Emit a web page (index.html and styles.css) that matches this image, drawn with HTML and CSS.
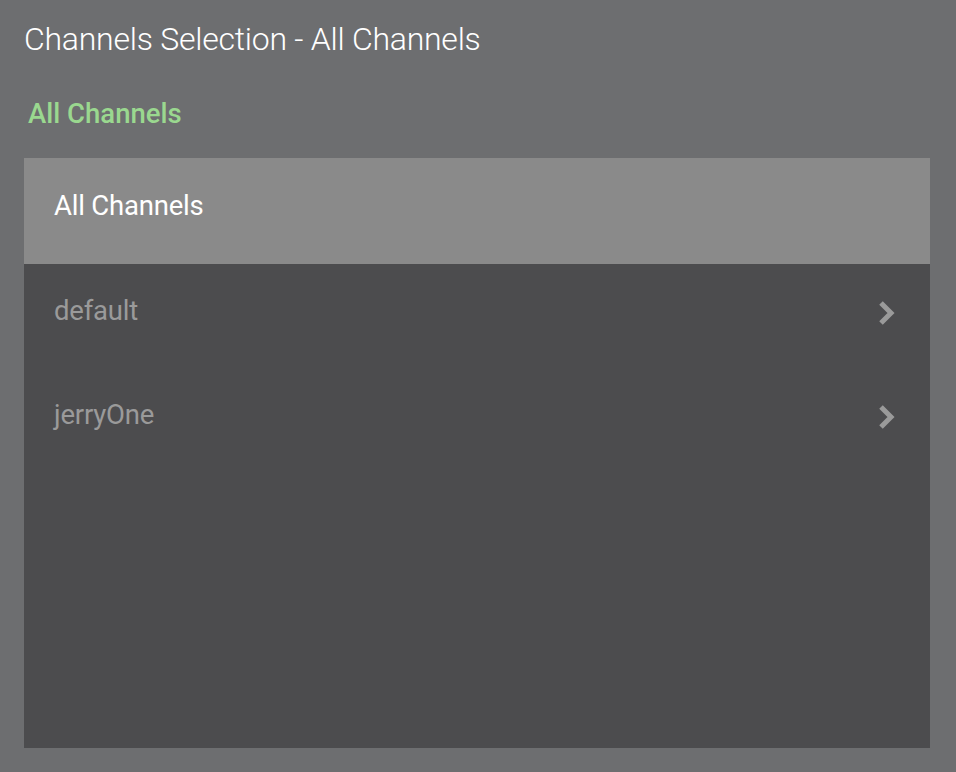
FILE: index.html
```html
<!DOCTYPE html>
<html>
<head>
<meta charset="utf-8">
<link rel="stylesheet" href="styles.css">
</head>
<body>
<div class="page">
  <h1 class="title">Channels Selection - All Channels</h1>
  <div class="crumb">All Channels</div>
  <div class="panel">
    <div class="row selected"><span class="label">All Channels</span></div>
    <div class="row"><span class="label">default</span>
      <svg class="chev" width="20" height="28" viewBox="0 0 20 28"><path d="M5 4 L15 14 L5 24" fill="none" stroke="#9a9a9a" stroke-width="5" stroke-linejoin="miter"/></svg>
    </div>
    <div class="row"><span class="label">jerryOne</span>
      <svg class="chev" width="20" height="28" viewBox="0 0 20 28"><path d="M5 4 L15 14 L5 24" fill="none" stroke="#9a9a9a" stroke-width="5" stroke-linejoin="miter"/></svg>
    </div>
  </div>
</div>
</body>
</html>
```
FILE: styles.css
```css
html, body {
  margin: 0;
  padding: 0;
  background: #6d6e70;
  font-family: Roboto, "Liberation Sans", sans-serif;
}
.page {
  width: 956px;
  height: 772px;
  box-sizing: border-box;
  padding: 20px 26px 24px 24px;
  display: flex;
  flex-direction: column;
}
.title {
  margin: 0;
  font-weight: 300;
  font-size: 32px;
  line-height: 38px;
  color: #ffffff;
  letter-spacing: -0.25px;
}
.crumb {
  margin: 39px 0 0 4px;
  font-size: 27.5px;
  line-height: 34px;
  font-weight: 500;
  color: #9ad88f;
}
.panel {
  margin-top: 27px;
  flex: 1;
  background: #4c4c4e;
}
.row {
  height: 104px;
  display: flex;
  align-items: center;
  justify-content: space-between;
  padding: 0 34px 12px 30px;
  box-sizing: border-box;
}
.row.selected {
  height: 106px;
  background: #8a8a8a;
}
.label {
  font-size: 27.5px;
  color: #9a9a9a;
  letter-spacing: -0.2px;
}
.selected .label {
  color: #ffffff;
}
.chev {
  display: block;
  margin-top: 6px;
}
```
